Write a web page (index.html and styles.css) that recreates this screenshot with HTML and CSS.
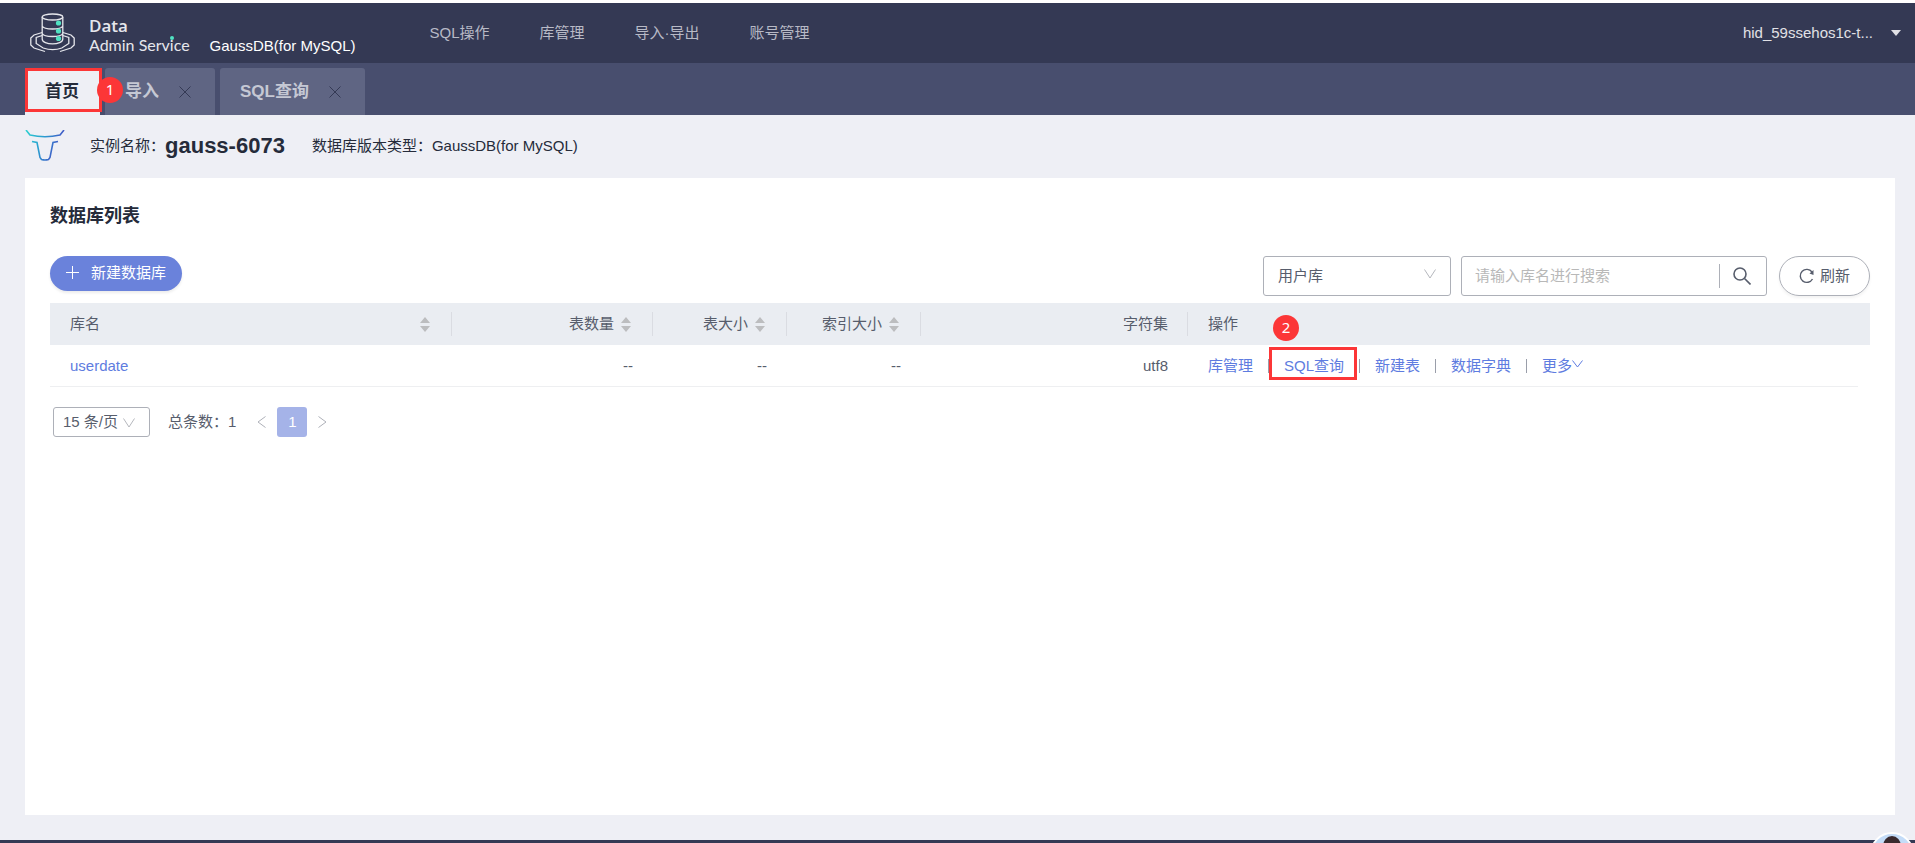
FILE: index.html
```html
<!DOCTYPE html>
<html lang="zh-CN">
<head>
    <meta charset="UTF-8">
    <title>Data Admin Service</title>
    <link rel="stylesheet" href="styles.css">
</head>
<body>
    <header class="header">
        <svg class="logo" width="46" height="40" viewBox="0 0 46 40" fill="none" stroke="#e6e7ec" stroke-width="1.3">
            <ellipse cx="22.500" cy="4" rx="10.300" ry="3"/>
            <path d="M12.200 4v22c0 6.500 20.600 6.500 20.600 0V4M12.200 13c2 4 18.600 4 20.600 0M12.200 20.500c2 4 18.600 4 20.600 0"/>
            <path d="M12.200 22.500l-6 2v6l7 4.500c6 2 13 2 18.600 0l7-4.500v-6l-6-2"/>
            <path d="M12.200 19.500L4 22l-3.200 3v7l3.200 3 11 3.500M32.800 19.500L41 22l3.200 3v7l-3.200 3-11 3.500"/>
            <g fill="#50e3c2" stroke="none"><circle cx="28.500" cy="10" r="2.600"/><circle cx="28.500" cy="18" r="2.600"/><circle cx="28.500" cy="25.500" r="2.600"/></g>
        </svg>
        <div class="brand"><strong>Data</strong><span>Admin Serv<span class="dotted">i</span>ce</span></div>
        <span class="product">GaussDB(for MySQL)</span>
        <nav class="menu">
            <a href="#">SQL操作</a>
            <a href="#">库管理</a>
            <a href="#">导入·导出</a>
            <a href="#">账号管理</a>
        </nav>
        <button class="user">hid_59ssehos1c-t...<span class="caret"></span></button>
    </header>

    <div class="tabs">
        <div class="tab active"><a href="#">首页</a><span class="mark mark-tab"></span><span class="badge badge-tab">1</span></div>
        <div class="tab"><a href="#">导入</a>
            <button class="close" aria-label="关闭导入"><svg width="12" height="12" viewBox="0 0 12 12"><path d="M.5.500l11 11M11.500.500l-11 11"/></svg></button>
        </div>
        <div class="tab"><a href="#">SQL查询</a>
            <button class="close" aria-label="关闭SQL查询"><svg width="12" height="12" viewBox="0 0 12 12"><path d="M.5.500l11 11M11.500.500l-11 11"/></svg></button>
        </div>
    </div>

    <div class="instance">
        <svg width="40" height="32" viewBox="0 0 40 32" fill="none" stroke="url(#bull)" stroke-width="1.600">
            <defs><linearGradient id="bull" gradientUnits="userSpaceOnUse" x1="2" y1="0" x2="36" y2="14"><stop offset="0" stop-color="#2ccfd0"/><stop offset=".5" stop-color="#2b9cd0"/><stop offset="1" stop-color="#4453c6"/></linearGradient></defs>
            <path d="M1 0l4 5q15 3.500 30 0l4-5"/>
            <path d="M7 11.500l5 1 3 15 1.500 2q3.500 1 7 0l1.500-2 3-15 5-1"/>
        </svg>
        <span class="label">实例名称：</span><h1>gauss-6073</h1>
        <span class="version">数据库版本类型：GaussDB(for MySQL)</span>
    </div>

    <main class="panel">
        <h2>数据库列表</h2>
        <div class="toolbar">
            <button class="create"><svg width="13" height="13" viewBox="0 0 13 13"><path d="M6.500 0v13M0 6.500h13"/></svg>新建数据库</button>
            <div class="filters">
                <div class="select type">
                    <select aria-label="库类型"><option>用户库</option></select>
                    <svg width="12" height="10" viewBox="0 0 12 10"><path d="M.5.500L6 9 11.500.500"/></svg>
                </div>
                <div class="search">
                    <input type="text" aria-label="库名" placeholder="请输入库名进行搜索">
                    <button aria-label="搜索"><svg width="18" height="18" viewBox="0 0 18 18"><circle cx="7" cy="7" r="6"/><path d="M11.500 11.500l6 6"/></svg></button>
                </div>
                <button class="refresh"><svg width="15" height="16" viewBox="0 0 15 16"><path d="M13 4A6.500 6.500 0 1 0 13.500 11"/><path class="tip" d="M14.500 2v5l-4-1.500z"/></svg>刷新</button>
            </div>
        </div>

        <table class="list">
            <colgroup><col class="c-name"><col class="c-count"><col class="c-size"><col class="c-size"><col class="c-charset"><col><col class="c-gutter"></colgroup>
            <thead>
                <tr>
                    <th><div class="head spread">库名<svg class="sort" width="10" height="15" viewBox="0 0 10 15"><path d="M5 0l5 6H0zM5 15l5-6H0z"/></svg></div></th>
                    <th><div class="head">表数量<svg class="sort" width="10" height="15" viewBox="0 0 10 15"><path d="M5 0l5 6H0zM5 15l5-6H0z"/></svg></div></th>
                    <th><div class="head">表大小<svg class="sort" width="10" height="15" viewBox="0 0 10 15"><path d="M5 0l5 6H0zM5 15l5-6H0z"/></svg></div></th>
                    <th><div class="head">索引大小<svg class="sort" width="10" height="15" viewBox="0 0 10 15"><path d="M5 0l5 6H0zM5 15l5-6H0z"/></svg></div></th>
                    <th><div class="head plain">字符集</div></th>
                    <th><div class="head last">操作</div></th>
                    <th class="gutter"></th>
                </tr>
            </thead>
            <tbody>
                <tr>
                    <td class="name"><a href="#">userdate</a></td>
                    <td class="num">--</td>
                    <td class="num">--</td>
                    <td class="num">--</td>
                    <td class="num">utf8</td>
                    <td>
                        <div class="actions">
                            <a href="#">库管理</a><i></i>
                            <span class="marked"><a href="#">SQL查询</a><span class="mark mark-query"></span><span class="badge badge-query">2</span></span><i></i>
                            <a href="#">新建表</a><i></i>
                            <a href="#">数据字典</a><i></i>
                            <a href="#">更多<svg width="11" height="8" viewBox="0 0 11 8"><path d="M.5.500l5 6.500 5-6.500"/></svg></a>
                        </div>
                    </td>
                    <td class="gutter"></td>
                </tr>
            </tbody>
        </table>

        <div class="pager">
            <div class="select size">
                <select aria-label="每页条数"><option>15 条/页</option></select>
                <svg width="12" height="10" viewBox="0 0 12 10"><path d="M.5.500L6 9 11.500.500"/></svg>
            </div>
            <span class="total">总条数：1</span>
            <button class="arrow" aria-label="上一页"><svg width="9" height="12" viewBox="0 0 9 12"><path d="M8.500.500L1 6l7.500 5.500"/></svg></button>
            <button class="page">1</button>
            <button class="arrow" aria-label="下一页"><svg width="9" height="12" viewBox="0 0 9 12"><path d="M.5.500L8 6 .5 11.500"/></svg></button>
        </div>
    </main>

    <footer class="footer"></footer>
    <button class="helper" aria-label="助手"><svg width="44" height="44" viewBox="0 0 44 44"><circle cx="22" cy="22" r="21" fill="#c4dcf8" stroke="#fff" stroke-width="2"/><ellipse cx="22" cy="14" rx="9" ry="10" fill="#3a2a2e"/></svg></button>
</body>
</html>
```
FILE: styles.css
```css
* { box-sizing: border-box; }
body {
    margin: 0; min-height: 100vh; display: flex; flex-direction: column;
    background: #eeeff5; color: #575d6c; overflow: hidden;
    font: 15px/20px "Liberation Sans", Arial, "Noto Sans CJK SC", sans-serif;
}
a { color: #5e7ce0; text-decoration: none; }
button { font: inherit; color: inherit; background: none; border: 0; padding: 0; cursor: pointer; }
svg { flex: none; fill: none; }
h1, h2 { margin: 0; color: #252b3a; }

.header { display: flex; align-items: center; height: 63px; padding: 0 14px 0 30px; border-top: 3px solid #fff; background: #343954; }
.brand { display: flex; flex-direction: column; margin-left: 13px; padding-top: 4px; color: #e6e7ec; font: 16px/19px Lato, sans-serif; }
.brand strong { font: 600 17px/19px "Open Sans", sans-serif; }
.dotted { position: relative; }
.dotted::before { content: ""; position: absolute; left: 0; top: 1px; width: 4px; height: 4px; border-radius: 50%; background: #50e3c2; }
.product { margin: 26px 0 0 20px; color: #fff; }
.menu { display: flex; gap: 50px; margin-left: 74px; }
.menu a { color: #b8bac6; }
.user { display: flex; align-items: center; gap: 18px; margin-left: auto; color: #e1e1e6; }
.caret { border: 5px solid transparent; border-top: 6px solid #e1e1e6; border-bottom: 0; }

.tabs { display: flex; gap: 5px; height: 52px; padding: 5px 25px 0; background: #484e6e; }
.tab { position: relative; display: flex; align-items: center; gap: 20px; padding: 0 24px 0 20px; border-radius: 3px 3px 0 0; background: #5f6583; font-size: 17px; font-weight: bold; }
.tab a { color: #c5c8d4; }
.tab.active { padding-right: 21px; background: #eeeff5; z-index: 1; }
.tab.active a { color: #252b3a; }
.close { display: flex; stroke: #343954; }

/* numbered step marks */
.mark { position: absolute; border: 3px solid #fc3637; pointer-events: none; }
.badge { position: absolute; width: 26px; height: 26px; border-radius: 50%; background: #fc3637; color: #fff; font: 15px/24px "Noto Sans", sans-serif; text-align: center; }
.mark-tab { inset: 0 -2px 3px 0; }
.badge-tab { right: -23px; top: 9px; }
.marked { position: relative; }
.mark-query { inset: -9px -13px -4px -15px; }
.badge-query { left: -11px; top: -41px; }

.instance { display: flex; align-items: center; height: 63px; padding: 0 25px 2px; color: #252b3a; }
.label { margin-left: 25px; }
.instance h1 { font-size: 22px; line-height: 28px; }
.version { margin-left: 27px; }

.panel { flex: 1; margin: 0 20px 25px 25px; padding: 25px; background: #fff; }
.panel h2 { font-size: 18px; line-height: 26px; }
.toolbar { display: flex; justify-content: space-between; align-items: flex-start; margin: 27px 0 7px; }
.create { display: flex; align-items: center; gap: 12px; height: 35px; padding: 0 16px 2px; border-radius: 18px; background: #6a82db; color: #fff; stroke: #fff; box-shadow: 0 2px 3px rgba(0, 0, 0, .08); }
.filters { display: flex; }
.select { position: relative; }
.select select { width: 100%; height: 100%; appearance: none; border: 1px solid #adb0b8; border-radius: 3px; background: #fff; color: #575d6c; font: inherit; }
.select svg { position: absolute; top: 50%; margin-top: -7px; stroke: #b5b7bd; pointer-events: none; }
.type { width: 188px; height: 40px; margin-right: 10px; }
.type select { padding: 0 14px; }
.type svg { right: 15px; }
.search { display: flex; align-items: center; width: 306px; height: 40px; margin-right: 12px; border: 1px solid #adb0b8; border-radius: 3px; }
.search input { flex: 1; min-width: 0; border: 0; outline: 0; padding: 0 13px; background: none; font: inherit; }
.search input::placeholder { color: #b8b8b8; }
.search button { display: flex; width: 47px; height: 24px; align-items: center; padding-left: 13px; border-left: 1px solid #adb0b8; stroke: #575d6c; stroke-width: 1.6; }
.refresh { display: flex; align-items: center; justify-content: center; gap: 6px; width: 91px; height: 40px; border: 1px solid #adb0b8; border-radius: 20px; box-shadow: 0 2px 3px rgba(0, 0, 0, .05); stroke: #575d6c; stroke-width: 1.4; }
.refresh .tip { fill: #575d6c; stroke: none; }

.list { width: 100%; table-layout: fixed; border-collapse: separate; border-spacing: 0; }
.c-name { width: 402px; }
.c-count { width: 201px; }
.c-size { width: 134px; }
.c-charset { width: 267px; }
.c-gutter { width: 12px; }
.list th { height: 42px; padding: 0; background: #eaedf2; font-weight: normal; }
.list td { height: 42px; padding: 0 20px; border-bottom: 1px solid #eeeff1; }
.list td.gutter { border: 0; padding: 0; }
.head { display: flex; align-items: center; justify-content: flex-end; gap: 7px; height: 24px; padding: 0 21px 0 20px; border-right: 1px solid #dadce2; }
.head.spread { justify-content: space-between; }
.head.plain { padding-right: 19px; }
.head.last { justify-content: flex-start; border: 0; }
.sort { fill: #bcbdbf; }
.num { text-align: right; }
.actions { display: flex; align-items: center; }
.actions i { width: 1px; height: 14px; margin: 0 15px; background: #9a9eaa; }
.actions a svg { stroke: #5e7ce0; margin-bottom: 3px; }

.pager { display: flex; align-items: center; margin: 20px 0 0 3px; }
.size { width: 97px; height: 30px; }
.size select { padding: 0 9px; }
.size svg { right: 15px; margin-top: -4px; }
.total { margin: 0 21px 0 18px; }
.arrow { display: flex; stroke: #adb0b8; }
.page { width: 30px; height: 30px; margin: 0 11px; border-radius: 3px; background: #a5b3e8; color: #fff; }

.footer { height: 3px; background: #343954; }
.helper { position: fixed; right: 1px; bottom: -38px; }
```
